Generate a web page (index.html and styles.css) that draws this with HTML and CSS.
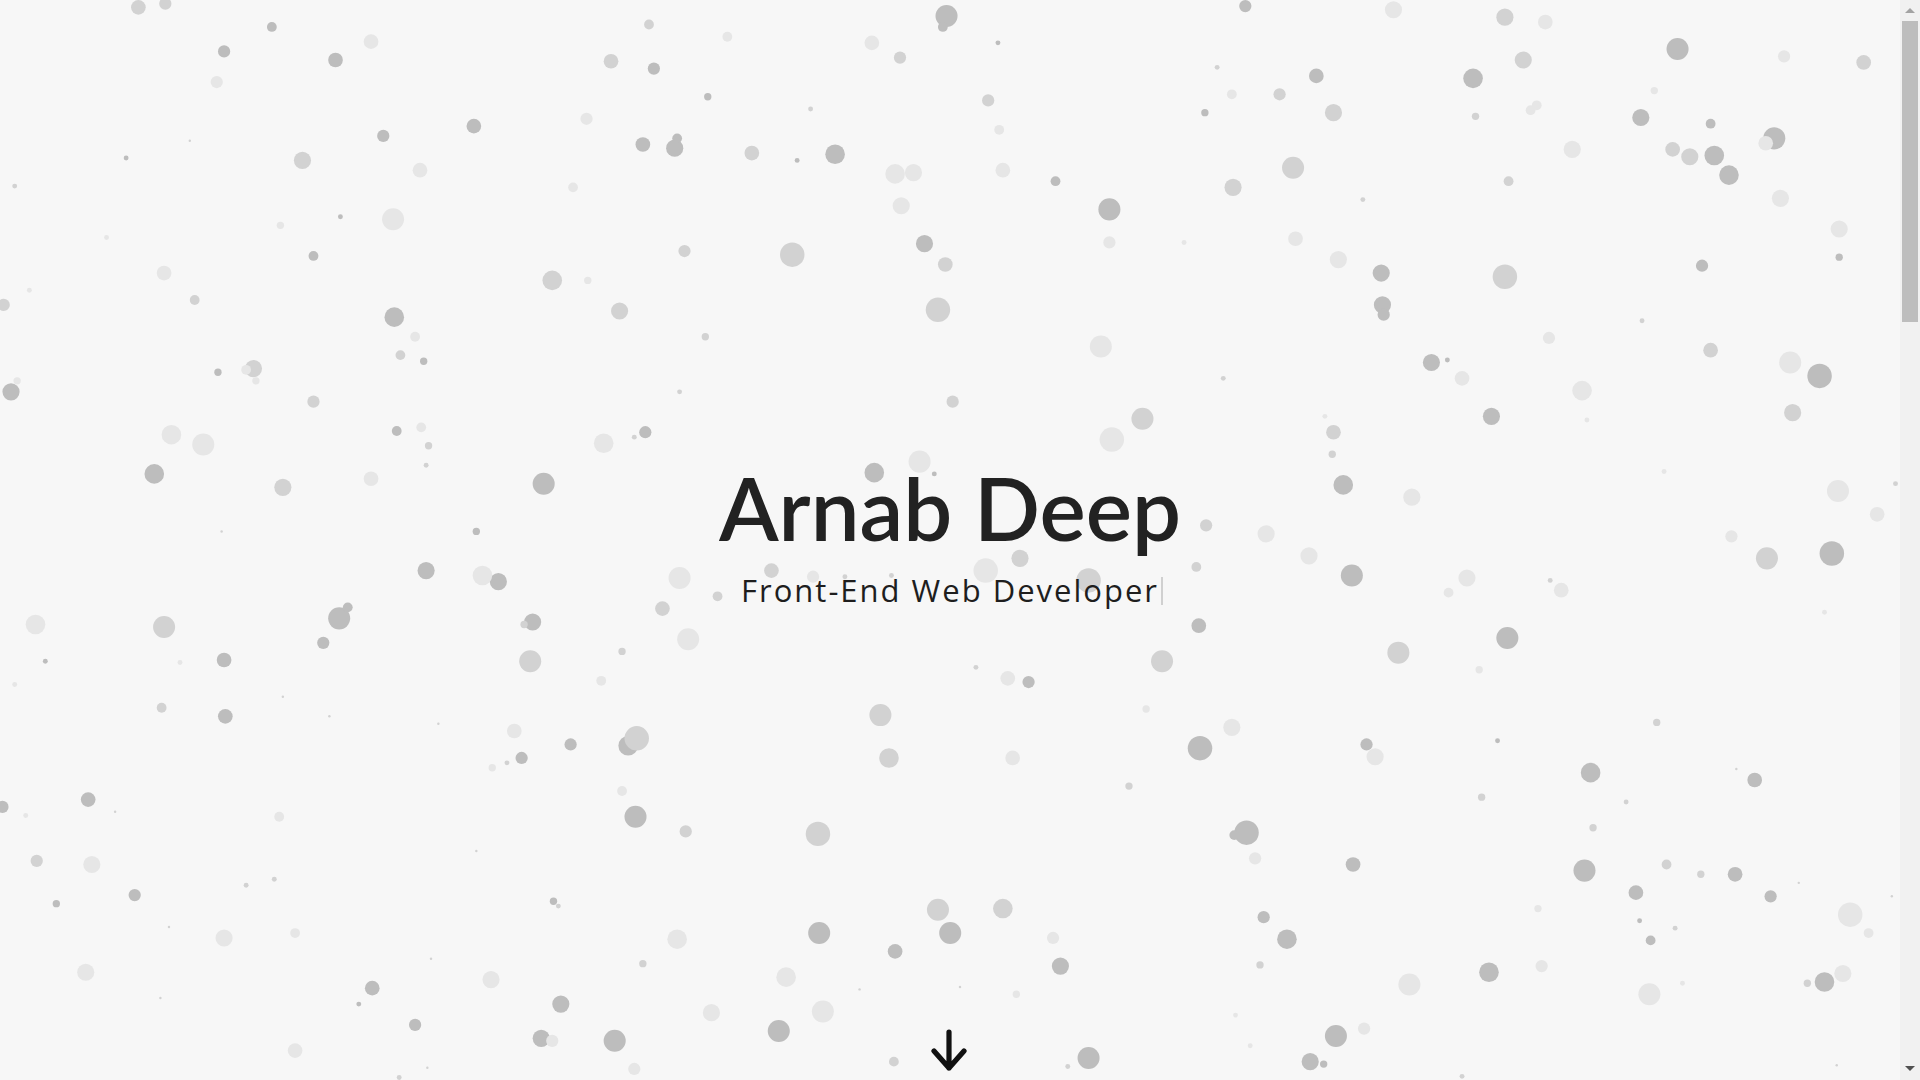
FILE: index.html
```html
<!DOCTYPE html>
<html lang="en">
<head>
<meta charset="utf-8">
<title>Arnab Deep</title>
<link rel="stylesheet" href="styles.css">
</head>
<body>
<div class="window">
<header class="hero">
  <svg class="particles" viewBox="0 0 1568 882" width="1920" height="1080" aria-hidden="true">
    <g class="d">
      <circle cx="222" cy="22" r="4"/><circle cx="183" cy="42" r="5"/><circle cx="274" cy="49" r="6"/>
      <circle cx="534" cy="56" r="5"/><circle cx="773" cy="13" r="9"/><circle cx="770" cy="22" r="4"/>
      <circle cx="815" cy="35" r="2"/><circle cx="1017" cy="5" r="5"/><circle cx="1203" cy="64" r="8"/>
      <circle cx="1370" cy="40" r="9"/><circle cx="1075" cy="62" r="6"/><circle cx="984" cy="92" r="3"/>
      <circle cx="578" cy="79" r="3"/><circle cx="1340" cy="96" r="7"/><circle cx="1397" cy="101" r="4"/>
      <circle cx="1449" cy="113" r="9"/><circle cx="1400" cy="127" r="8"/><circle cx="1412" cy="143" r="8"/>
      <circle cx="387" cy="103" r="6"/><circle cx="313" cy="111" r="5"/><circle cx="103" cy="129" r="2"/>
      <circle cx="525" cy="118" r="6"/><circle cx="551" cy="121" r="7"/><circle cx="553" cy="113" r="4"/>
      <circle cx="651" cy="131" r="2"/><circle cx="682" cy="126" r="8"/><circle cx="862" cy="148" r="4"/>
      <circle cx="906" cy="171" r="9"/><circle cx="278" cy="177" r="2"/><circle cx="1502" cy="210" r="3"/>
      <circle cx="1390" cy="217" r="5"/><circle cx="1128" cy="223" r="7"/><circle cx="755" cy="199" r="7"/>
      <circle cx="256" cy="209" r="4"/><circle cx="322" cy="259" r="8"/><circle cx="1129" cy="249" r="7"/>
      <circle cx="1130" cy="257" r="5"/><circle cx="1486" cy="307" r="10"/><circle cx="1169" cy="296" r="7"/>
      <circle cx="1182" cy="294" r="2"/><circle cx="1218" cy="340" r="7"/><circle cx="346" cy="295" r="3"/>
      <circle cx="178" cy="304" r="3"/><circle cx="9" cy="320" r="7"/><circle cx="324" cy="352" r="4"/>
      <circle cx="527" cy="353" r="5"/><circle cx="714" cy="386" r="8"/><circle cx="763" cy="387" r="2"/>
      <circle cx="1097" cy="396" r="8"/><circle cx="126" cy="387" r="8"/><circle cx="444" cy="395" r="9"/>
      <circle cx="389" cy="434" r="3"/><circle cx="1496" cy="452" r="10"/><circle cx="348" cy="466" r="7"/>
      <circle cx="407" cy="475" r="7"/><circle cx="1104" cy="470" r="9"/><circle cx="277" cy="505" r="9"/>
      <circle cx="284" cy="496" r="4"/><circle cx="435" cy="508" r="7"/><circle cx="264" cy="525" r="5"/>
      <circle cx="183" cy="539" r="6"/><circle cx="37" cy="540" r="2"/><circle cx="979" cy="511" r="6"/>
      <circle cx="1231" cy="521" r="9"/><circle cx="840" cy="557" r="5"/><circle cx="184" cy="585" r="6"/>
      <circle cx="466" cy="608" r="5"/><circle cx="513" cy="609" r="8"/><circle cx="980" cy="611" r="10"/>
      <circle cx="1116" cy="608" r="5"/><circle cx="1223" cy="605" r="2"/><circle cx="1299" cy="631" r="8"/>
      <circle cx="1433" cy="637" r="6"/><circle cx="426" cy="619" r="5"/><circle cx="2" cy="659" r="5"/>
      <circle cx="72" cy="653" r="6"/><circle cx="519" cy="667" r="9"/><circle cx="1018" cy="680" r="10"/>
      <circle cx="1008" cy="682" r="4"/><circle cx="110" cy="731" r="5"/><circle cx="46" cy="738" r="3"/>
      <circle cx="452" cy="736" r="3"/><circle cx="1105" cy="706" r="6"/><circle cx="1294" cy="711" r="9"/>
      <circle cx="1417" cy="714" r="6"/><circle cx="1336" cy="729" r="6"/><circle cx="1446" cy="732" r="5"/>
      <circle cx="669" cy="762" r="9"/><circle cx="776" cy="762" r="9"/><circle cx="731" cy="777" r="6"/>
      <circle cx="1032" cy="749" r="5"/><circle cx="1051" cy="767" r="8"/><circle cx="1339" cy="752" r="2"/>
      <circle cx="1348" cy="768" r="4"/><circle cx="866" cy="789" r="7"/><circle cx="1216" cy="794" r="8"/>
      <circle cx="1490" cy="802" r="8"/><circle cx="304" cy="807" r="6"/><circle cx="293" cy="820" r="2"/>
      <circle cx="458" cy="820" r="7"/><circle cx="339" cy="837" r="5"/><circle cx="442" cy="848" r="7"/>
      <circle cx="502" cy="850" r="9"/><circle cx="636" cy="842" r="9"/><circle cx="889" cy="864" r="9"/>
      <circle cx="1091" cy="846" r="9"/><circle cx="1070" cy="867" r="7"/><circle cx="1081" cy="869" r="3"/>
    </g>
    <g class="m">
      <circle cx="113" cy="6" r="6"/><circle cx="135" cy="3" r="5"/><circle cx="530" cy="20" r="4"/>
      <circle cx="499" cy="50" r="6"/><circle cx="735" cy="47" r="5"/><circle cx="1229" cy="14" r="7"/>
      <circle cx="1244" cy="49" r="7"/><circle cx="1522" cy="51" r="6"/><circle cx="1089" cy="92" r="7"/>
      <circle cx="1045" cy="77" r="5"/><circle cx="994" cy="55" r="2"/><circle cx="662" cy="89" r="2"/>
      <circle cx="807" cy="82" r="5"/><circle cx="1205" cy="95" r="3"/><circle cx="1380" cy="128" r="7"/>
      <circle cx="1366" cy="122" r="6"/><circle cx="1232" cy="148" r="4"/><circle cx="247" cy="131" r="7"/>
      <circle cx="12" cy="152" r="2"/><circle cx="614" cy="125" r="6"/><circle cx="1007" cy="153" r="7"/>
      <circle cx="1056" cy="137" r="9"/><circle cx="155" cy="115" r="1"/><circle cx="1113" cy="163" r="2"/>
      <circle cx="1229" cy="226" r="10"/><circle cx="772" cy="216" r="6"/><circle cx="647" cy="208" r="10"/>
      <circle cx="559" cy="205" r="5"/><circle cx="451" cy="229" r="8"/><circle cx="3" cy="249" r="5"/>
      <circle cx="159" cy="245" r="4"/><circle cx="506" cy="254" r="7"/><circle cx="766" cy="253" r="10"/>
      <circle cx="1341" cy="262" r="2"/><circle cx="576" cy="275" r="3"/><circle cx="1397" cy="286" r="6"/>
      <circle cx="999" cy="309" r="2"/><circle cx="1464" cy="337" r="7"/><circle cx="327" cy="290" r="4"/>
      <circle cx="207" cy="301" r="7"/><circle cx="256" cy="328" r="5"/><circle cx="778" cy="328" r="5"/>
      <circle cx="555" cy="320" r="2"/><circle cx="933" cy="342" r="9"/><circle cx="1089" cy="353" r="6"/>
      <circle cx="350" cy="364" r="3"/><circle cx="518" cy="357" r="2"/><circle cx="1088" cy="371" r="3"/>
      <circle cx="231" cy="398" r="7"/><circle cx="348" cy="380" r="2"/><circle cx="181" cy="434" r="1"/>
      <circle cx="985" cy="429" r="5"/><circle cx="1443" cy="456" r="9"/><circle cx="1548" cy="395" r="2"/>
      <circle cx="630" cy="466" r="6"/><circle cx="690" cy="471" r="2"/><circle cx="728" cy="470" r="2"/>
      <circle cx="833" cy="456" r="7"/><circle cx="889" cy="474" r="10"/><circle cx="977" cy="463" r="4"/>
      <circle cx="1266" cy="474" r="2"/><circle cx="134" cy="512" r="9"/><circle cx="428" cy="510" r="3"/>
      <circle cx="541" cy="497" r="6"/><circle cx="586" cy="487" r="4"/><circle cx="433" cy="540" r="9"/>
      <circle cx="508" cy="532" r="3"/><circle cx="949" cy="540" r="9"/><circle cx="1142" cy="533" r="9"/>
      <circle cx="797" cy="545" r="2"/><circle cx="231" cy="569" r="1"/><circle cx="132" cy="578" r="4"/>
      <circle cx="269" cy="585" r="1"/><circle cx="358" cy="591" r="1"/><circle cx="520" cy="603" r="10"/>
      <circle cx="719" cy="584" r="9"/><circle cx="726" cy="619" r="8"/><circle cx="1353" cy="590" r="3"/>
      <circle cx="414" cy="623" r="2"/><circle cx="922" cy="642" r="3"/><circle cx="1210" cy="651" r="3"/>
      <circle cx="1328" cy="655" r="2"/><circle cx="94" cy="663" r="1"/><circle cx="560" cy="679" r="5"/>
      <circle cx="668" cy="681" r="10"/><circle cx="1301" cy="676" r="3"/><circle cx="1418" cy="628" r="1"/>
      <circle cx="30" cy="703" r="5"/><circle cx="201" cy="723" r="2"/><circle cx="224" cy="718" r="2"/>
      <circle cx="389" cy="695" r="1"/><circle cx="456" cy="740" r="2"/><circle cx="1361" cy="706" r="4"/>
      <circle cx="1389" cy="714" r="3"/><circle cx="1469" cy="721" r="1"/><circle cx="1545" cy="732" r="1"/>
      <circle cx="766" cy="743" r="9"/><circle cx="819" cy="742" r="8"/><circle cx="1368" cy="758" r="2"/>
      <circle cx="138" cy="757" r="1"/><circle cx="352" cy="783" r="1"/><circle cx="525" cy="787" r="3"/>
      <circle cx="1029" cy="788" r="3"/><circle cx="1476" cy="803" r="3"/><circle cx="131" cy="815" r="1"/>
      <circle cx="643" cy="796" r="3"/><circle cx="730" cy="867" r="4"/><circle cx="784" cy="806" r="1"/>
      <circle cx="702" cy="808" r="1"/><circle cx="872" cy="871" r="2"/><circle cx="1194" cy="879" r="2"/>
      <circle cx="326" cy="880" r="2"/><circle cx="349" cy="872" r="1"/><circle cx="1500" cy="870" r="1"/>
    </g>
    <g class="l">
      <circle cx="303" cy="34" r="6"/><circle cx="177" cy="67" r="5"/><circle cx="594" cy="30" r="4"/>
      <circle cx="712" cy="35" r="6"/><circle cx="1138" cy="8" r="7"/><circle cx="1262" cy="18" r="6"/>
      <circle cx="1457" cy="46" r="5"/><circle cx="1006" cy="77" r="4"/><circle cx="816" cy="106" r="4"/>
      <circle cx="1351" cy="74" r="3"/><circle cx="1250" cy="90" r="4"/><circle cx="1255" cy="86" r="4"/>
      <circle cx="1442" cy="117" r="6"/><circle cx="1284" cy="122" r="7"/><circle cx="343" cy="139" r="6"/>
      <circle cx="731" cy="142" r="8"/><circle cx="746" cy="141" r="7"/><circle cx="819" cy="139" r="6"/>
      <circle cx="468" cy="153" r="4"/><circle cx="479" cy="97" r="5"/><circle cx="1454" cy="162" r="7"/>
      <circle cx="736" cy="168" r="7"/><circle cx="321" cy="179" r="9"/><circle cx="229" cy="184" r="3"/>
      <circle cx="87" cy="194" r="2"/><circle cx="1502" cy="187" r="7"/><circle cx="1093" cy="212" r="7"/>
      <circle cx="1058" cy="195" r="6"/><circle cx="906" cy="198" r="5"/><circle cx="967" cy="198" r="2"/>
      <circle cx="480" cy="229" r="3"/><circle cx="134" cy="223" r="6"/><circle cx="24" cy="237" r="2"/>
      <circle cx="899" cy="283" r="9"/><circle cx="1265" cy="276" r="5"/><circle cx="1462" cy="296" r="9"/>
      <circle cx="1194" cy="309" r="6"/><circle cx="1292" cy="319" r="8"/><circle cx="339" cy="275" r="4"/>
      <circle cx="201" cy="302" r="4"/><circle cx="209" cy="311" r="3"/><circle cx="14" cy="311" r="3"/>
      <circle cx="908" cy="359" r="10"/><circle cx="1082" cy="340" r="2"/><circle cx="344" cy="349" r="4"/>
      <circle cx="140" cy="355" r="8"/><circle cx="166" cy="363" r="9"/><circle cx="493" cy="362" r="8"/>
      <circle cx="751" cy="377" r="9"/><circle cx="1153" cy="406" r="7"/><circle cx="1296" cy="343" r="2"/>
      <circle cx="1359" cy="385" r="2"/><circle cx="1501" cy="401" r="9"/><circle cx="303" cy="391" r="6"/>
      <circle cx="1034" cy="436" r="7"/><circle cx="1069" cy="454" r="7"/><circle cx="1414" cy="438" r="5"/>
      <circle cx="1533" cy="420" r="6"/><circle cx="394" cy="470" r="8"/><circle cx="555" cy="472" r="9"/>
      <circle cx="664" cy="471" r="5"/><circle cx="805" cy="466" r="10"/><circle cx="1198" cy="472" r="7"/>
      <circle cx="1275" cy="482" r="6"/><circle cx="1183" cy="484" r="4"/><circle cx="1490" cy="500" r="2"/>
      <circle cx="29" cy="510" r="8"/><circle cx="562" cy="522" r="9"/><circle cx="147" cy="541" r="2"/>
      <circle cx="1208" cy="547" r="3"/><circle cx="823" cy="554" r="6"/><circle cx="491" cy="556" r="4"/>
      <circle cx="12" cy="559" r="2"/><circle cx="420" cy="597" r="6"/><circle cx="827" cy="619" r="6"/>
      <circle cx="936" cy="579" r="3"/><circle cx="1006" cy="594" r="7"/><circle cx="1123" cy="618" r="7"/>
      <circle cx="402" cy="627" r="3"/><circle cx="21" cy="666" r="2"/><circle cx="228" cy="667" r="4"/>
      <circle cx="508" cy="646" r="4"/><circle cx="1025" cy="701" r="5"/><circle cx="75" cy="706" r="7"/>
      <circle cx="860" cy="766" r="5"/><circle cx="1511" cy="747" r="10"/><circle cx="1526" cy="762" r="4"/>
      <circle cx="1256" cy="742" r="3"/><circle cx="183" cy="766" r="7"/><circle cx="241" cy="762" r="4"/>
      <circle cx="553" cy="767" r="8"/><circle cx="1259" cy="789" r="5"/><circle cx="1505" cy="795" r="7"/>
      <circle cx="70" cy="794" r="7"/><circle cx="401" cy="800" r="7"/><circle cx="451" cy="850" r="5"/>
      <circle cx="581" cy="827" r="7"/><circle cx="642" cy="798" r="8"/><circle cx="672" cy="826" r="9"/>
      <circle cx="830" cy="812" r="3"/><circle cx="1009" cy="829" r="2"/><circle cx="1021" cy="854" r="2"/>
      <circle cx="1114" cy="840" r="5"/><circle cx="1151" cy="804" r="9"/><circle cx="1347" cy="812" r="9"/>
      <circle cx="1374" cy="803" r="2"/><circle cx="241" cy="858" r="6"/><circle cx="518" cy="873" r="5"/>
    </g>
  </svg>

  <div class="intro">
    <h1 class="name">Arnab Deep</h1>
    <p class="role">Front-End Web Developer<span class="cursor"></span></p>
  </div>

  <a class="scroll-down" href="#about" aria-label="Scroll down">
    <svg viewBox="0 0 24 22" width="48" height="44"><path d="M12 2 V20 M4.5 11.5 L12 20 L19.5 11.5" fill="none" stroke="#111" stroke-width="2.6" stroke-linecap="round" stroke-linejoin="round"/></svg>
  </a>
</header>

<div class="scrollbar" aria-hidden="true">
  <span class="sb-arrow sb-up"></span>
  <div class="sb-track"><span class="sb-thumb"></span></div>
  <span class="sb-arrow sb-down"></span>
</div>
</div>
</body>
</html>
```

FILE: styles.css
```css
* { box-sizing: border-box; }

html, body {
  margin: 0;
  padding: 0;
  overflow: hidden;
}

body {
  background: #f7f7f7;
  color: #222;
  font-family: "Lato", "Open Sans", sans-serif;
}

.window {
  display: flex;
  width: 1920px;
  height: 1080px;
}

.hero {
  position: relative;
  flex: 1;
  height: 1080px;
  overflow: hidden;
  display: flex;
  align-items: center;
  justify-content: center;
}

.particles {
  position: absolute;
  top: 0;
  left: 0;
}

.particles .d { fill: #bdbdbd; }
.particles .m { fill: #d2d2d2; }
.particles .l { fill: #e6e6e6; }

.intro {
  position: relative;
  display: flex;
  flex-direction: column;
  align-items: center;
  margin-top: -6px;
}

.name {
  margin: 0;
  font-family: "Lato", sans-serif;
  font-weight: 600;
  font-size: 87px;
  line-height: 1;
  color: #222;
}

.role {
  margin: 21px 0 0;
  font-family: "Open Sans", sans-serif;
  font-weight: 400;
  font-size: 31px;
  line-height: 1.2;
  color: #1e1e1e;
  letter-spacing: 2px;
  display: flex;
  align-items: center;
  padding-left: 4px;
}

.cursor {
  display: inline-block;
  width: 2px;
  height: 28px;
  margin-left: 2px;
  background: #d0d0d0;
}

.scroll-down {
  position: absolute;
  bottom: 8px;
  left: 50%;
  transform: translateX(-50%);
  margin-left: -1px;
  display: block;
  line-height: 0;
}

.scrollbar {
  width: 20px;
  height: 1080px;
  background: #f1f1f1;
  display: flex;
  flex-direction: column;
  align-items: center;
}

.sb-arrow {
  width: 0;
  height: 0;
  border-left: 5px solid transparent;
  border-right: 5px solid transparent;
}

.sb-up {
  margin-top: 8px;
  border-bottom: 5px solid #a3a3a3;
}

.sb-down {
  margin-bottom: 9px;
  border-top: 5px solid #505050;
}

.sb-track {
  flex: 1;
  width: 100%;
  padding: 0 2px;
  margin-top: 8px;
}

.sb-thumb {
  display: block;
  height: 301px;
  background: #bdbdbd;
}
```
